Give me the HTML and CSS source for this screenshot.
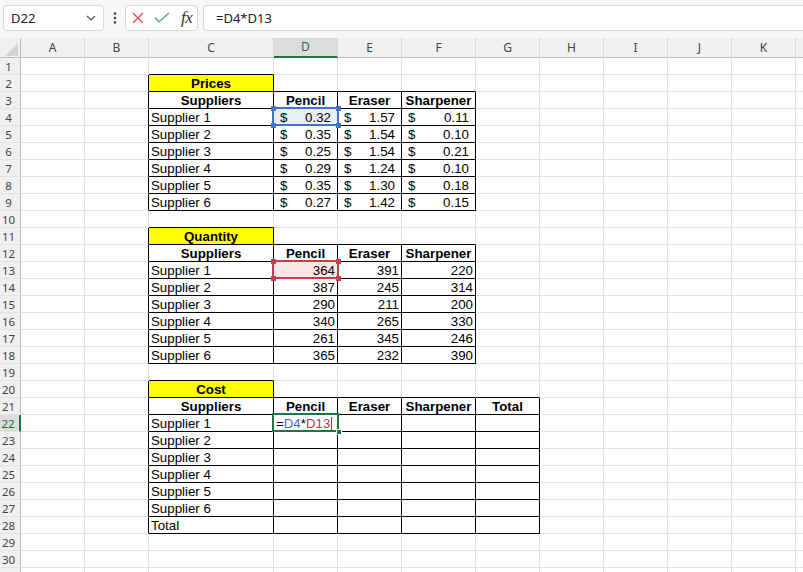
FILE: index.html
```html
<!DOCTYPE html>
<html>
<head>
<meta charset="utf-8">
<link rel="stylesheet" href="styles.css">
</head>
<body>
<div class="fbar">
  <div class="namebox"><span>D22</span><svg width="10" height="6" viewBox="0 0 10 6"><path d="M1 1l4 4 4-4" fill="none" stroke="#555" stroke-width="1.2"/></svg></div>
  <div class="more"><svg width="4" height="12" viewBox="0 0 4 12"><circle cx="2" cy="1.5" r="1.3" fill="#444"/><circle cx="2" cy="6" r="1.3" fill="#444"/><circle cx="2" cy="10.5" r="1.3" fill="#444"/></svg></div>
  <div class="iconbox">
    <svg class="ix" width="12" height="12" viewBox="0 0 12 12"><path d="M1 1L11 11M11 1L1 11" fill="none" stroke="#e0474c" stroke-width="1.2"/></svg>
    <svg class="ick" width="16" height="12" viewBox="0 0 16 12"><path d="M1 5.5L5 10L15 1" fill="none" stroke="#4aa35a" stroke-width="1.2"/></svg>
    <span class="fx">fx</span>
  </div>
  <div class="formula">=D4*D13</div>
</div>
<div class="sheet">
  <div class="hdr"><div class="corner"><div class="tri"></div></div><div>A</div><div>B</div><div>C</div><div class="act">D</div><div>E</div><div>F</div><div>G</div><div>H</div><div>I</div><div>J</div><div>K</div><div></div></div>

  <div class="row"><div class="rh">1</div><div></div><div></div><div class="b"></div><div></div><div></div><div></div><div></div><div></div><div></div><div></div><div></div><div></div></div>
  <div class="row"><div class="rh">2</div><div></div><div class="r"></div><div class="r b y">Prices</div><div class="b"></div><div class="b"></div><div class="b"></div><div></div><div></div><div></div><div></div><div></div><div></div></div>
  <div class="row"><div class="rh">3</div><div></div><div class="r"></div><div class="r b h">Suppliers</div><div class="r b h">Pencil</div><div class="r b h">Eraser</div><div class="r b h">Sharpener</div><div></div><div></div><div></div><div></div><div></div><div></div></div>
  <div class="row"><div class="rh">4</div><div></div><div class="r"></div><div class="r b">Supplier 1</div><div class="r b acc ref-blue"><span>$</span><span>0.32</span></div><div class="r b acc"><span>$</span><span>1.57</span></div><div class="r b acc"><span>$</span><span>0.11</span></div><div></div><div></div><div></div><div></div><div></div><div></div></div>
  <div class="row"><div class="rh">5</div><div></div><div class="r"></div><div class="r b">Supplier 2</div><div class="r b acc"><span>$</span><span>0.35</span></div><div class="r b acc"><span>$</span><span>1.54</span></div><div class="r b acc"><span>$</span><span>0.10</span></div><div></div><div></div><div></div><div></div><div></div><div></div></div>
  <div class="row"><div class="rh">6</div><div></div><div class="r"></div><div class="r b">Supplier 3</div><div class="r b acc"><span>$</span><span>0.25</span></div><div class="r b acc"><span>$</span><span>1.54</span></div><div class="r b acc"><span>$</span><span>0.21</span></div><div></div><div></div><div></div><div></div><div></div><div></div></div>
  <div class="row"><div class="rh">7</div><div></div><div class="r"></div><div class="r b">Supplier 4</div><div class="r b acc"><span>$</span><span>0.29</span></div><div class="r b acc"><span>$</span><span>1.24</span></div><div class="r b acc"><span>$</span><span>0.10</span></div><div></div><div></div><div></div><div></div><div></div><div></div></div>
  <div class="row"><div class="rh">8</div><div></div><div class="r"></div><div class="r b">Supplier 5</div><div class="r b acc"><span>$</span><span>0.35</span></div><div class="r b acc"><span>$</span><span>1.30</span></div><div class="r b acc"><span>$</span><span>0.18</span></div><div></div><div></div><div></div><div></div><div></div><div></div></div>
  <div class="row"><div class="rh">9</div><div></div><div class="r"></div><div class="r b">Supplier 6</div><div class="r b acc"><span>$</span><span>0.27</span></div><div class="r b acc"><span>$</span><span>1.42</span></div><div class="r b acc"><span>$</span><span>0.15</span></div><div></div><div></div><div></div><div></div><div></div><div></div></div>
  <div class="row"><div class="rh">10</div><div></div><div></div><div class="b"></div><div></div><div></div><div></div><div></div><div></div><div></div><div></div><div></div><div></div></div>
  <div class="row"><div class="rh">11</div><div></div><div class="r"></div><div class="r b y">Quantity</div><div class="b"></div><div class="b"></div><div class="b"></div><div></div><div></div><div></div><div></div><div></div><div></div></div>
  <div class="row"><div class="rh">12</div><div></div><div class="r"></div><div class="r b h">Suppliers</div><div class="r b h">Pencil</div><div class="r b h">Eraser</div><div class="r b h">Sharpener</div><div></div><div></div><div></div><div></div><div></div><div></div></div>
  <div class="row"><div class="rh">13</div><div></div><div class="r"></div><div class="r b">Supplier 1</div><div class="r b n ref-red">364</div><div class="r b n">391</div><div class="r b n">220</div><div></div><div></div><div></div><div></div><div></div><div></div></div>
  <div class="row"><div class="rh">14</div><div></div><div class="r"></div><div class="r b">Supplier 2</div><div class="r b n">387</div><div class="r b n">245</div><div class="r b n">314</div><div></div><div></div><div></div><div></div><div></div><div></div></div>
  <div class="row"><div class="rh">15</div><div></div><div class="r"></div><div class="r b">Supplier 3</div><div class="r b n">290</div><div class="r b n">211</div><div class="r b n">200</div><div></div><div></div><div></div><div></div><div></div><div></div></div>
  <div class="row"><div class="rh">16</div><div></div><div class="r"></div><div class="r b">Supplier 4</div><div class="r b n">340</div><div class="r b n">265</div><div class="r b n">330</div><div></div><div></div><div></div><div></div><div></div><div></div></div>
  <div class="row"><div class="rh">17</div><div></div><div class="r"></div><div class="r b">Supplier 5</div><div class="r b n">261</div><div class="r b n">345</div><div class="r b n">246</div><div></div><div></div><div></div><div></div><div></div><div></div></div>
  <div class="row"><div class="rh">18</div><div></div><div class="r"></div><div class="r b">Supplier 6</div><div class="r b n">365</div><div class="r b n">232</div><div class="r b n">390</div><div></div><div></div><div></div><div></div><div></div><div></div></div>
  <div class="row"><div class="rh">19</div><div></div><div></div><div class="b"></div><div></div><div></div><div></div><div></div><div></div><div></div><div></div><div></div><div></div></div>
  <div class="row"><div class="rh">20</div><div></div><div class="r"></div><div class="r b y">Cost</div><div class="b"></div><div class="b"></div><div class="b"></div><div class="b"></div><div></div><div></div><div></div><div></div><div></div></div>
  <div class="row"><div class="rh">21</div><div></div><div class="r"></div><div class="r b h">Suppliers</div><div class="r b h">Pencil</div><div class="r b h">Eraser</div><div class="r b h">Sharpener</div><div class="r b h">Total</div><div></div><div></div><div></div><div></div><div></div></div>
  <div class="row"><div class="rh act">22</div><div></div><div class="r"></div><div class="r b">Supplier 1</div><div class="r b edit"><span class="op">=</span><span class="cb">D4</span><span class="op">*</span><span class="cr">D13</span><span class="caret"></span><span class="handle"></span></div><div class="r b"></div><div class="r b"></div><div class="r b"></div><div></div><div></div><div></div><div></div><div></div></div>
  <div class="row"><div class="rh">23</div><div></div><div class="r"></div><div class="r b">Supplier 2</div><div class="r b"></div><div class="r b"></div><div class="r b"></div><div class="r b"></div><div></div><div></div><div></div><div></div><div></div></div>
  <div class="row"><div class="rh">24</div><div></div><div class="r"></div><div class="r b">Supplier 3</div><div class="r b"></div><div class="r b"></div><div class="r b"></div><div class="r b"></div><div></div><div></div><div></div><div></div><div></div></div>
  <div class="row"><div class="rh">25</div><div></div><div class="r"></div><div class="r b">Supplier 4</div><div class="r b"></div><div class="r b"></div><div class="r b"></div><div class="r b"></div><div></div><div></div><div></div><div></div><div></div></div>
  <div class="row"><div class="rh">26</div><div></div><div class="r"></div><div class="r b">Supplier 5</div><div class="r b"></div><div class="r b"></div><div class="r b"></div><div class="r b"></div><div></div><div></div><div></div><div></div><div></div></div>
  <div class="row"><div class="rh">27</div><div></div><div class="r"></div><div class="r b">Supplier 6</div><div class="r b"></div><div class="r b"></div><div class="r b"></div><div class="r b"></div><div></div><div></div><div></div><div></div><div></div></div>
  <div class="row"><div class="rh">28</div><div></div><div class="r"></div><div class="r b">Total</div><div class="r b"></div><div class="r b"></div><div class="r b"></div><div class="r b"></div><div></div><div></div><div></div><div></div><div></div></div>
  <div class="row"><div class="rh">29</div><div></div><div></div><div></div><div></div><div></div><div></div><div></div><div></div><div></div><div></div><div></div><div></div></div>
  <div class="row"><div class="rh">30</div><div></div><div></div><div></div><div></div><div></div><div></div><div></div><div></div><div></div><div></div><div></div><div></div></div>
  <div class="row"><div class="rh">31</div><div></div><div></div><div></div><div></div><div></div><div></div><div></div><div></div><div></div><div></div><div></div><div></div></div>
</div>
</body>
</html>
```

FILE: styles.css
```css
* { box-sizing: border-box; }
html, body { margin: 0; padding: 0; }
body {
  width: 803px;
  height: 572px;
  overflow: hidden;
  background: #fff;
  font-family: "Liberation Sans", Arial, sans-serif;
}

/* formula bar */
.fbar {
  height: 38px;
  background: #f7f7f7;
  display: flex;
  align-items: flex-start;
  padding: 5px 0 0 3px;
  font-family: "Noto Sans", "Open Sans", sans-serif;
  font-size: 13px;
  color: #222;
}
.namebox {
  width: 101px;
  height: 26px;
  background: #fff;
  border: 1px solid #d6d6d6;
  border-radius: 4px;
  display: flex;
  align-items: center;
  justify-content: space-between;
  padding: 0 7px 0 7px;
}
.more {
  width: 21px;
  height: 26px;
  display: flex;
  align-items: center;
  justify-content: center;
}
.iconbox {
  width: 73px;
  height: 26px;
  background: #fff;
  border: 1px solid #d6d6d6;
  border-radius: 4px;
  display: flex;
  align-items: center;
  padding-left: 6px;
}
.ick { margin-left: 10px; }
.fx {
  margin-left: 11px;
  font-family: "Liberation Serif", "DejaVu Serif", serif;
  font-style: italic;
  font-size: 17px;
  color: #333;
  letter-spacing: -0.5px;
}
.formula {
  flex: 1;
  height: 26px;
  margin-left: 5px;
  background: #fff;
  border: 1px solid #d6d6d6;
  border-right: none;
  border-radius: 4px 0 0 4px;
  display: flex;
  align-items: center;
  padding-left: 12px;
}

/* sheet grid */
.sheet { font-size: 13.3px; color: #000; }
.hdr, .row {
  display: grid;
  grid-template-columns: 21px 64px 64px 125px 64px 64px 74px 64px 64px 64px 64px 64px 64px;
}
.hdr {
  height: 20px;
  background: #f0f0f0;
  border-bottom: 1px solid #bdbdbd;
  font-family: "Noto Sans", "Open Sans", sans-serif;
  font-size: 12px;
  color: #444;
}
.hdr > div {
  border-right: 1px solid #d8d8d8;
  text-align: center;
  line-height: 19px;
}
.hdr > .act {
  background: #dcdcdc;
  color: #1d6b3e;
  border-bottom: 2px solid #217346;
  line-height: 18px;
}
.corner {
  display: flex;
  align-items: flex-end;
  justify-content: flex-end;
  padding: 0 2px 2px 0;
  border-right-color: #bdbdbd !important;
}
.tri {
  width: 0;
  height: 0;
  border-left: 13px solid transparent;
  border-bottom: 13px solid #d4d4d4;
}

.row { height: 17px; }
.row > div {
  height: 17px;
  border-right: 1px solid #e1e1e1;
  border-bottom: 1px solid #e1e1e1;
  line-height: 17px;
  padding: 0 2px 0 2px;
  white-space: nowrap;
}
.row > .rh {
  background: #f0f0f0;
  border-right: 1px solid #bdbdbd;
  border-bottom: 1px solid #e4e4e4;
  font-family: "Noto Sans", "Open Sans", sans-serif;
  font-size: 11.5px;
  color: #444;
  text-align: center;
  padding: 1px 3px 0 0;
  line-height: 16px;
}
.row > .rh.act {
  background: #dcdcdc;
  color: #1d6b3e;
  border-right: 2px solid #217346;
}

.row > .r { border-right-color: #000; }
.row > .b { border-bottom-color: #000; }
.y { background: #ffff00; font-weight: bold; text-align: center; }
.h { font-weight: bold; text-align: center; }
.n { text-align: right; }
.row > .acc {
  display: flex;
  justify-content: space-between;
  padding-left: 6px;
  padding-right: 6px;
}

/* formula reference highlights */
.ref-blue, .ref-red, .edit { position: relative; }
.ref-blue { background: #e8eef8; }
.ref-red { background: #f8e6e6; }
.ref-blue::after, .ref-red::after, .edit::after {
  content: "";
  position: absolute;
  left: -2px;
  top: -2px;
  right: -2px;
  bottom: -1px;
  border: 2px solid #4472c4;
}
.ref-red::after { border-color: #c0404c; }
.edit::after { border-color: #217346; }
.ref-blue::before, .ref-red::before {
  content: "";
  position: absolute;
  left: -3px;
  top: -3px;
  width: 5px;
  height: 5px;
  background: #4472c4;
  box-shadow: 65px 0 #4472c4, 0 17px #4472c4, 65px 17px #4472c4;
  z-index: 1;
}
.ref-red::before {
  background: #c0404c;
  box-shadow: 65px 0 #c0404c, 0 17px #c0404c, 65px 17px #c0404c;
}
.edit .cb { color: #3d6fd1; }
.edit .cr { color: #d1324d; }
.caret {
  display: inline-block;
  width: 1px;
  height: 13px;
  background: #555;
  margin-left: 1px;
  vertical-align: -2px;
}
.handle {
  position: absolute;
  right: -5px;
  bottom: -4px;
  width: 6px;
  height: 6px;
  background: #217346;
  border: 1px solid #fff;
  z-index: 2;
}
```
